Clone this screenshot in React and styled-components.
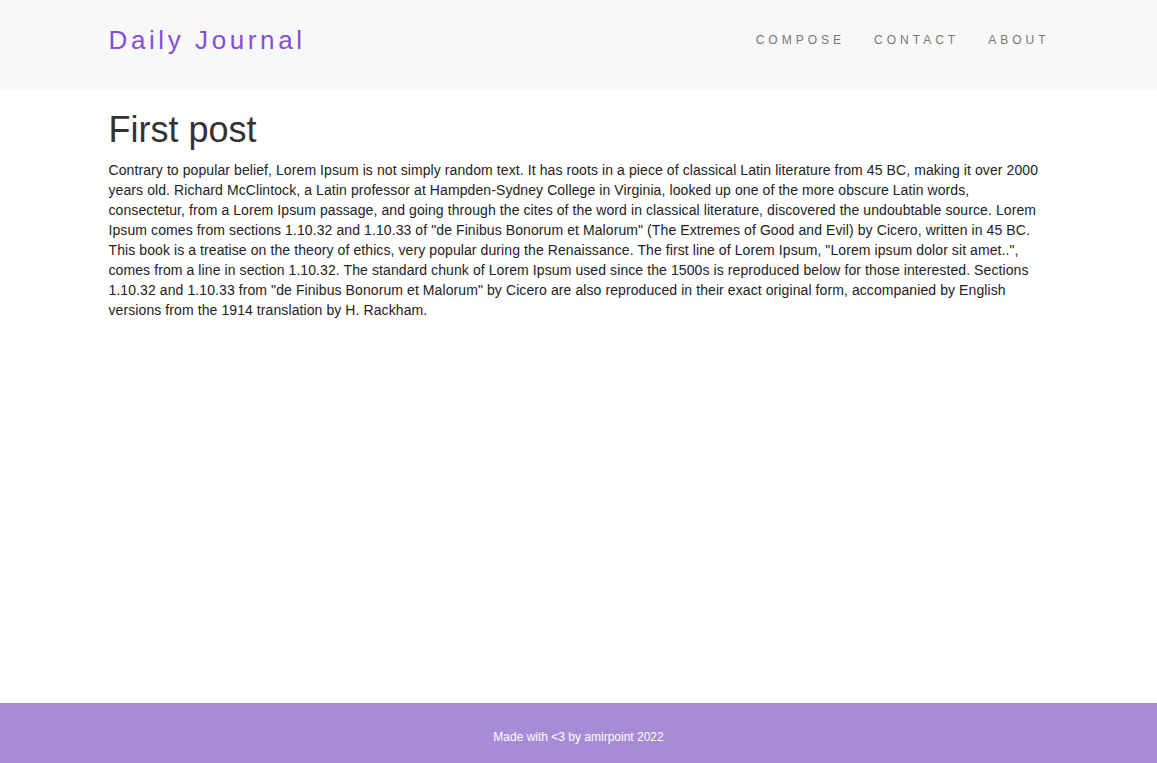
import React from "react";
import styled, { createGlobalStyle } from "styled-components";

const GlobalStyle = createGlobalStyle`
  html, body {
    margin: 0;
    padding: 0;
    height: 100%;
  }
  body {
    font-family: "Liberation Sans", Arial, Helvetica, sans-serif;
    font-size: 14px;
    line-height: 20px;
    color: #333;
    background: #fff;
  }
  #root {
    min-height: 100%;
  }
`;

const App = () => {
  return (
    <Page>
      <GlobalStyle />
      <Navbar>
        <Container>
          <Brand>Daily Journal</Brand>
          <NavList>
            <NavLink>COMPOSE</NavLink>
            <NavLink>CONTACT</NavLink>
            <NavLink>ABOUT</NavLink>
          </NavList>
        </Container>
      </Navbar>
      <Main>
        <Title>First post</Title>
        <Body>
          Contrary to popular belief, Lorem Ipsum is not simply random text. It
          has roots in a piece of classical Latin literature from 45 BC, making
          it over 2000 years old. Richard McClintock, a Latin professor at
          Hampden-Sydney College in Virginia, looked up one of the more obscure
          Latin words, consectetur, from a Lorem Ipsum passage, and going
          through the cites of the word in classical literature, discovered the
          undoubtable source. Lorem Ipsum comes from sections 1.10.32 and
          1.10.33 of "de Finibus Bonorum et Malorum" (The Extremes of Good and
          Evil) by Cicero, written in 45 BC. This book is a treatise on the
          theory of ethics, very popular during the Renaissance. The first line
          of Lorem Ipsum, "Lorem ipsum dolor sit amet..", comes from a line in
          section 1.10.32. The standard chunk of Lorem Ipsum used since the
          1500s is reproduced below for those interested. Sections 1.10.32 and
          1.10.33 from "de Finibus Bonorum et Malorum" by Cicero are also
          reproduced in their exact original form, accompanied by English
          versions from the 1914 translation by H. Rackham.
        </Body>
      </Main>
      <Footer>Made with &lt;3 by amirpoint 2022</Footer>
    </Page>
  );
};

export default App;

const Page = styled.div`
  min-height: 100vh;
  display: flex;
  flex-direction: column;
`;

const Navbar = styled.div`
  width: 100%;
  height: 90px;
  background-color: #f8f8f8;
  display: flex;
  align-items: center;
`;

const Container = styled.div`
  width: 940px;
  margin: 0 auto;
  display: flex;
  align-items: center;
  justify-content: space-between;
`;

const Brand = styled.div`
  font-size: 26px;
  letter-spacing: 3.6px;
  color: #8350d4;
  line-height: 1;
  margin-top: -10px;
`;

const NavList = styled.div`
  display: flex;
  align-items: center;
  gap: 29px;
  margin-top: -11px;
  margin-right: -1px;
`;

const NavLink = styled.div`
  font-size: 12px;
  letter-spacing: 4px;
  color: #777;
  cursor: pointer;
`;

const Main = styled.div`
  width: 940px;
  margin: 0 auto;
  flex: 1;
`;

const Title = styled.h1`
  font-size: 36px;
  font-weight: 500;
  line-height: 1.1;
  margin: 20px 0 10px;
  color: #333;
`;

const Body = styled.p`
  margin: 0;
  font-size: 14px;
  line-height: 20px;
  letter-spacing: 0.09px;
  color: #222;
`;

const Footer = styled.div`
  height: 60px;
  box-sizing: border-box;
  padding-top: 7px;
  background-color: #a68bd6;
  color: #fff;
  font-size: 12px;
  display: flex;
  align-items: center;
  justify-content: center;
`;
